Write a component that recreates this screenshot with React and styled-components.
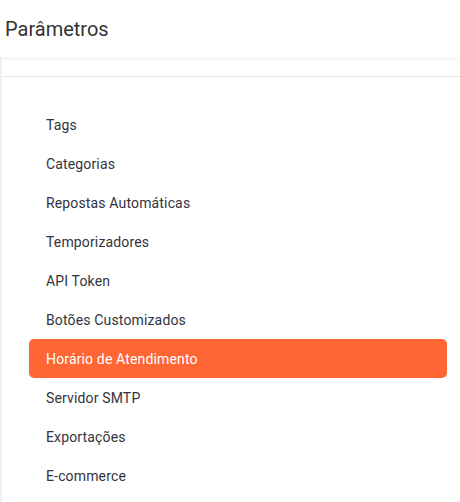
import React from "react";
import styled, { createGlobalStyle } from "styled-components";

const Global = createGlobalStyle`
  html, body { margin: 0; padding: 0; background: #f0f0f7; }
  body { font-family: Roboto, "Noto Sans", sans-serif; }
`;

const Page = styled.div`
  width: 460px;
  height: 502px;
  display: flex;
  flex-direction: column;
  overflow: hidden;
  background: #f0f0f7;
`;

const Header = styled.header`
  height: 57px;
  flex-shrink: 0;
  background: #ffffff;
  display: flex;
  align-items: center;
  padding-left: 5px;
  box-shadow: 0 1px 5px rgba(0, 0, 0, 0.07);
  position: relative;
  z-index: 1;
`;

const Title = styled.h1`
  margin: 0;
  font-size: 20px;
  font-weight: 400;
  color: #333333;
  letter-spacing: 0;
`;

const Panel = styled.main`
  flex: 1;
  margin-left: 2px;
  background: #ffffff;
  display: flex;
  flex-direction: column;
`;

const Divider = styled.div`
  margin-top: 19px;
  height: 1px;
  background: #e6e6e6;
`;

const Menu = styled.ul`
  list-style: none;
  margin: 28px 0 0 0;
  padding: 0 13px 0 27px;
  display: flex;
  flex-direction: column;
`;

const Item = styled.li`
  height: 39px;
  display: flex;
  align-items: center;
  padding-left: 17px;
  border-radius: 5px;
  font-size: 14px;
  color: ${(p) => (p.$active ? "#ffffff" : "#333340")};
  background: ${(p) => (p.$active ? "#ff6633" : "transparent")};
  letter-spacing: 0.15px;
`;

const items = [
  "Tags",
  "Categorias",
  "Repostas Automáticas",
  "Temporizadores",
  "API Token",
  "Botões Customizados",
  "Horário de Atendimento",
  "Servidor SMTP",
  "Exportações",
  "E-commerce",
];

export default function App() {
  return (
    <>
      <Global />
      <Page>
        <Header>
          <Title>Parâmetros</Title>
        </Header>
        <Panel>
          <Divider />
          <Menu>
            {items.map((t) => (
              <Item key={t} $active={t === "Horário de Atendimento"}>
                {t}
              </Item>
            ))}
          </Menu>
        </Panel>
      </Page>
    </>
  );
}
